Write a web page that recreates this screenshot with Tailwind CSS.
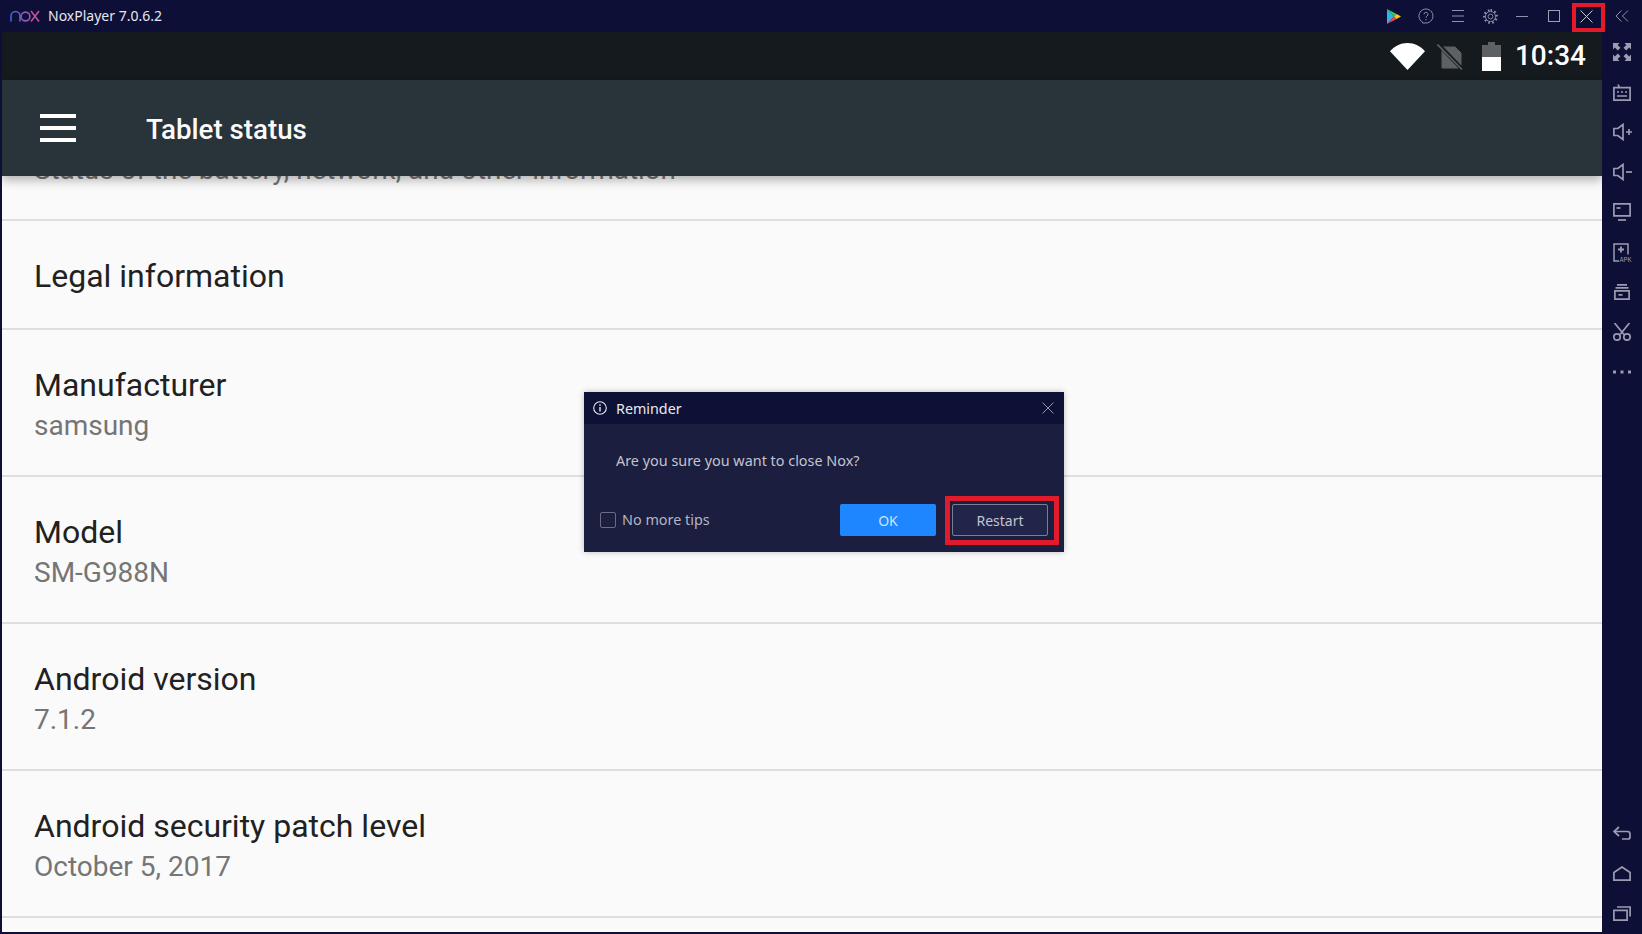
<!DOCTYPE html>
<html lang="en">
<head>
<meta charset="utf-8">
<title>NoxPlayer</title>
<script src="https://cdn.jsdelivr.net/npm/@tailwindcss/browser@4"></script>
</head>
<body class="m-0">
<div class="relative w-[1642px] h-[934px] overflow-hidden bg-[#0d0f36] font-['Roboto',sans-serif] flex flex-col">

  <!-- window title bar -->
  <header class="h-8 shrink-0 flex items-center">
    <svg class="ml-[10px] w-[30px] h-[12px]" viewBox="0 0 30 12" fill="none" stroke="url(#noxg)" stroke-width="1.6">
      <defs><linearGradient id="noxg" gradientUnits="userSpaceOnUse" x1="0" y1="0" x2="30" y2="0"><stop offset="0" stop-color="#3f62e0"/><stop offset=".5" stop-color="#8a5db5"/><stop offset="1" stop-color="#e0489c"/></linearGradient></defs>
      <path d="M1 11.5V6a4.5 4.5 0 0 1 9 0v5.5"/>
      <circle cx="15.5" cy="6.5" r="4.4"/>
      <path d="M21 1l8 10.5M29 1l-8 10.5"/>
    </svg>
    <span class="ml-[8px] text-[14px] text-[#e6e7ee] font-['Noto_Sans',sans-serif] leading-none">NoxPlayer 7.0.6.2</span>
    <div class="ml-auto flex items-center h-8 text-[#8f91a8]">
      <div class="w-8 h-8 flex items-center justify-center">
        <svg class="w-[14px] h-[15px]" viewBox="0 0 14 15"><path d="M0 0l7 7.5L0 15z" fill="#27b6e8"/><path d="M0 0l9.6 5-2.6 2.5z" fill="#35c76b"/><path d="M0 15l9.6-5L7 7.5z" fill="#e8475a"/><path d="M9.6 5L14 7.5 9.6 10 7 7.5z" fill="#f7c71d"/></svg>
      </div>
      <div class="w-8 h-8 flex items-center justify-center">
        <svg class="w-4 h-4" viewBox="0 0 16 16" fill="none" stroke="currentColor" stroke-width="1"><path d="M4.7 14.2A7 7 0 1 1 8 15H4.500z"/><path d="M6 6.300a2 2 0 1 1 3 1.700c-.7.4-1 .9-1 1.700"/><path d="M8 11v1.200"/></svg>
      </div>
      <div class="w-8 h-8 flex items-center justify-center">
        <svg class="w-[14px] h-[14px]" viewBox="0 0 14 14" stroke="currentColor" stroke-width="1"><path d="M1 1.500h12M1 7h12M1 12.500h12"/></svg>
      </div>
      <div class="w-8 h-8 flex items-center justify-center">
        <svg class="w-[15px] h-[15px]" viewBox="0 0 16 16" fill="none" stroke="currentColor"><circle cx="8" cy="8" r="2.600"/><circle cx="8" cy="8" r="5.400"/><path stroke-width="2.400" stroke-dasharray="1.700 2.540" d="M8 1.300a6.700 6.700 0 1 1 0 13.400a6.700 6.700 0 1 1 0-13.400"/></svg>
      </div>
      <div class="w-8 h-8 flex items-center justify-center">
        <svg class="w-[12px] h-[12px]" viewBox="0 0 12 12" stroke="currentColor" stroke-width="1"><path d="M0 6.500h12"/></svg>
      </div>
      <div class="w-8 h-8 flex items-center justify-center">
        <div class="w-[12px] h-[12px] border border-[#9b9db2]"></div>
      </div>
      <div class="w-8 h-8 flex items-center justify-center">
        <svg class="w-[13px] h-[13px]" viewBox="0 0 13 13" stroke="#c9cad6" stroke-width="1"><path d="M.5.500l12 12M12.500.500l-12 12"/></svg>
      </div>
      <div class="w-10 h-8 flex items-center justify-center">
        <svg class="w-[14px] h-[12px]" viewBox="0 0 14 12" fill="none" stroke="currentColor" stroke-width="1"><path d="M6.500.500L1 6l5.500 5.500M13 .500L7.500 6l5.500 5.500"/></svg>
      </div>
    </div>
  </header>

  <div class="flex-1 flex min-h-0">
    <!-- android screen -->
    <main class="ml-[2px] mb-[2px] w-[1600px] flex flex-col bg-[#fafafa] overflow-hidden">
      <div class="h-12 shrink-0 bg-[#141a1d] flex items-center">
        <div class="ml-auto flex items-center">
          <svg class="w-[35px] h-[27px]" viewBox="0 0 35 27"><path d="M17.500 27L0 8.200C4.500 3.200 10.500 0 17.500 0S30.500 3.200 35 8.200z" fill="#fff"/></svg>
          <svg class="ml-[12px] w-[26px] h-[27px]" viewBox="0 0 26 27"><path d="M5 4h13l6 6v15H5z" fill="#5d6164" stroke="#5d6164" stroke-width="1" stroke-linejoin="round"/><path d="M1 1l24 25" stroke="#141a1d" stroke-width="4"/><path d="M.5 1.500l24.500 25" stroke="#5d6164" stroke-width="1.600"/></svg>
          <svg class="ml-[19px] w-[19px] h-[29px]" viewBox="0 0 19 29"><path d="M6 0h7v3h6v12H0V3h6z" fill="#5d6164"/><path d="M0 15h19v14H0z" fill="#fff"/></svg>
          <span class="ml-[14px] mr-[16px] text-[28px] leading-none font-medium text-white">10:34</span>
        </div>
      </div>
      <div class="relative z-10 h-24 shrink-0 bg-[#29333a] flex items-center shadow-[0_4px_10px_rgba(0,0,0,0.3)]">
        <div class="ml-[38px] w-9 flex flex-col gap-2">
          <div class="h-1 bg-white"></div>
          <div class="h-1 bg-white"></div>
          <div class="h-1 bg-white"></div>
        </div>
        <h1 class="ml-[70px] pt-1 text-[27.7px] font-medium text-[#fafafa] leading-none">Tablet status</h1>
      </div>
      <div class="flex-1 min-h-0">
        <div class="h-[45px] border-b-2 border-[#dedede] overflow-hidden flex flex-col justify-end pl-[32px] pb-[29px]">
          <p class="text-[27.8px] leading-[40px] text-[#757575]">Status of the battery, network, and other information</p>
        </div>
        <div class="h-[109px] border-b-2 border-[#dedede] flex items-center pl-[32px] pt-[2px]">
          <p class="text-[32px] leading-10 text-[#212121]">Legal information</p>
        </div>
        <div class="h-[147px] border-b-2 border-[#dedede] pl-[32px] pt-[35px]">
          <p class="text-[32px] leading-10 text-[#212121]">Manufacturer</p>
          <p class="mt-[1px] text-[28px] leading-10 text-[#757575]">samsung</p>
        </div>
        <div class="h-[147px] border-b-2 border-[#dedede] pl-[32px] pt-[35px]">
          <p class="text-[32px] leading-10 text-[#212121]">Model</p>
          <p class="mt-[1px] text-[28px] leading-10 text-[#757575]">SM-G988N</p>
        </div>
        <div class="h-[147px] border-b-2 border-[#dedede] pl-[32px] pt-[35px]">
          <p class="text-[32px] leading-10 text-[#212121]">Android version</p>
          <p class="mt-[1px] text-[28px] leading-10 text-[#757575]">7.1.2</p>
        </div>
        <div class="h-[147px] border-b-2 border-[#dedede] pl-[32px] pt-[35px]">
          <p class="text-[32px] leading-10 text-[#212121]">Android security patch level</p>
          <p class="mt-[1px] text-[28px] leading-10 text-[#757575]">October 5, 2017</p>
        </div>
      </div>
    </main>

    <!-- right tool rail -->
    <aside class="w-10 flex flex-col justify-between text-[#9a9cb0] pb-[1px]">
      <div class="flex flex-col">
        <div class="h-10 flex items-center justify-center">
          <svg class="w-[18px] h-[18px]" viewBox="0 0 18 18" fill="currentColor"><path d="M0 0h6.500L4.600 1.900 7.500 4.800 4.800 7.500 1.900 4.600 0 6.500zM18 0v6.500l-1.900-1.900-2.900 2.900-2.700-2.700 2.900-2.900L11.500 0zM0 18v-6.500l1.900 1.900 2.900-2.900 2.700 2.700-2.900 2.900 1.900 1.900zM18 18h-6.500l1.900-1.900-2.900-2.900 2.700-2.700 2.900 2.900 1.900-1.900z"/></svg>
        </div>
        <div class="h-10 flex items-center justify-center">
          <svg class="w-[18px] h-[17px]" viewBox="0 0 18 17" fill="none" stroke="currentColor" stroke-width="1.700"><path d="M.9 3.700h16.200v12.400H.9zM6.500 3.700L5 .5"/><path d="M4 8h2M8 8h2M12 8h2M4 12h10" stroke-width="1.700"/></svg>
        </div>
        <div class="h-10 flex items-center justify-center">
          <svg class="w-[19px] h-[18px]" viewBox="0 0 19 18" fill="none" stroke="currentColor" stroke-width="1.700"><path d="M.9 5.500h3.900L10 1.500v15l-5.200-4H.9z"/><path d="M13 9h6M16 6v6"/></svg>
        </div>
        <div class="h-10 flex items-center justify-center">
          <svg class="w-[19px] h-[18px]" viewBox="0 0 19 18" fill="none" stroke="currentColor" stroke-width="1.700"><path d="M.9 5.500h3.900L10 1.500v15l-5.200-4H.9z"/><path d="M13 9h6"/></svg>
        </div>
        <div class="h-10 flex items-center justify-center">
          <svg class="w-[18px] h-[18px]" viewBox="0 0 18 18" fill="none" stroke="currentColor" stroke-width="1.700"><path d="M.9.900h16.200v12H.9z"/><path d="M3.500 5h4"/><path d="M5 17h8"/></svg>
        </div>
        <div class="h-10 flex items-center justify-center">
          <svg class="w-[19px] h-[19px] overflow-visible" viewBox="0 0 19 19" fill="none" stroke="currentColor" stroke-width="1.500"><path d="M6 18H1V1h14v10.500"/><path d="M5 6.500h6M8 3.500v6" stroke-width="1.800"/><text x="6.500" y="18.500" font-size="7" font-family="Roboto,sans-serif" fill="currentColor" stroke="none" textLength="12" lengthAdjust="spacingAndGlyphs">APK</text></svg>
        </div>
        <div class="h-10 flex items-center justify-center">
          <svg class="w-[16px] h-[16px]" viewBox="0 0 16 16" fill="none" stroke="currentColor" stroke-width="1.700"><path d="M3 .9h10M1.500 3.800h13"/><path d="M.9 6.900h14.200v8.200H.9zM4.500 10.800h4"/></svg>
        </div>
        <div class="h-10 flex items-center justify-center">
          <svg class="w-[18px] h-[18px]" viewBox="0 0 18 18" fill="none" stroke="currentColor" stroke-width="1.700"><path d="M1.500 0l9.500 11.500M16.500 0L7 11.500"/><circle cx="4" cy="14" r="3.200"/><circle cx="14" cy="14" r="3.200"/></svg>
        </div>
        <div class="h-10 flex items-center justify-center">
          <svg class="w-[18px] h-[4px]" viewBox="0 0 18 4" fill="currentColor"><path d="M0 .5h3v3H0zM7.500 .5h3v3h-3zM15 .5h3v3h-3z"/></svg>
        </div>
      </div>
      <div class="flex flex-col">
        <div class="h-10 flex items-center justify-center">
          <svg class="w-[18px] h-[14px]" viewBox="0 0 18 14" fill="none" stroke="currentColor" stroke-width="1.700"><path d="M6 1L1 5.500 6 10"/><path d="M1 5.500h13.500c1.500 0 2.500 1 2.500 2.500v3c0 1.200-1 2-2 2H9"/></svg>
        </div>
        <div class="h-10 flex items-center justify-center">
          <svg class="w-[18px] h-[15px]" viewBox="0 0 18 15" fill="none" stroke="currentColor" stroke-width="1.700"><path d="M.9 14.100V6.500L9 1l8.100 5.500v7.600z"/></svg>
        </div>
        <div class="h-10 flex items-center justify-center">
          <svg class="w-[18px] h-[15px]" viewBox="0 0 18 15" fill="none" stroke="currentColor" stroke-width="1.700"><path d="M.9 4.400h13.200v9.700H.9z"/><path d="M4 1h13.100v9.500"/></svg>
        </div>
      </div>
    </aside>
  </div>

  <!-- reminder dialog -->
  <section class="absolute z-20 left-[584px] top-[392px] w-[480px] h-[160px] bg-[#1b1e3e] font-['Noto_Sans',sans-serif] shadow-[0_0_6px_rgba(0,0,0,0.25)] flex flex-col">
    <div class="h-8 shrink-0 bg-[#0e1136] flex items-center pl-[9px] pr-[10px]">
      <svg class="w-[14px] h-[14px]" viewBox="0 0 14 14" fill="none" stroke="#e8e9f0" stroke-width="1.100"><circle cx="7" cy="7" r="6.300"/><path d="M7 6v4.500M7 3.300v1.400" stroke-width="1.400"/></svg>
      <span class="ml-[9px] pt-[2px] text-[14.3px] leading-none text-[#e8e9f0]">Reminder</span>
      <svg class="ml-auto w-[12px] h-[12px]" viewBox="0 0 12 12" stroke="#8f91a8" stroke-width="1"><path d="M.5.500l11 11M11.500.500l-11 11"/></svg>
    </div>
    <p class="ml-8 mt-[27px] text-[14.4px] leading-[20px] text-[#c3c4d0]">Are you sure you want to close Nox?</p>
    <div class="mt-auto mb-4 flex items-center pl-[16px] pr-4">
      <div class="w-4 h-4 rounded-[2px] border border-[#6a6c84]"></div>
      <span class="ml-[6px] text-[14.4px] leading-none text-[#b4b5c4]">No more tips</span>
      <button class="ml-auto w-24 h-8 rounded-[2px] bg-[#1e86ff] text-[14px] text-[#cfe4ff]">OK</button>
      <button class="ml-4 w-24 h-8 rounded-[2px] border border-[#7b7d93] bg-[#22254a] text-[14px] text-[#c3c4d0]">Restart</button>
    </div>
  </section>

  <!-- red annotations -->
  <div class="absolute z-30 left-[945px] top-[496px] w-[114px] h-[49px] border-[5px] border-[#e21b2c]"></div>
  <div class="absolute z-30 left-[1572px] top-[3px] w-[33px] h-[29px] border-[4px] border-[#e21b2c]"></div>
</div>
</body>
</html>
